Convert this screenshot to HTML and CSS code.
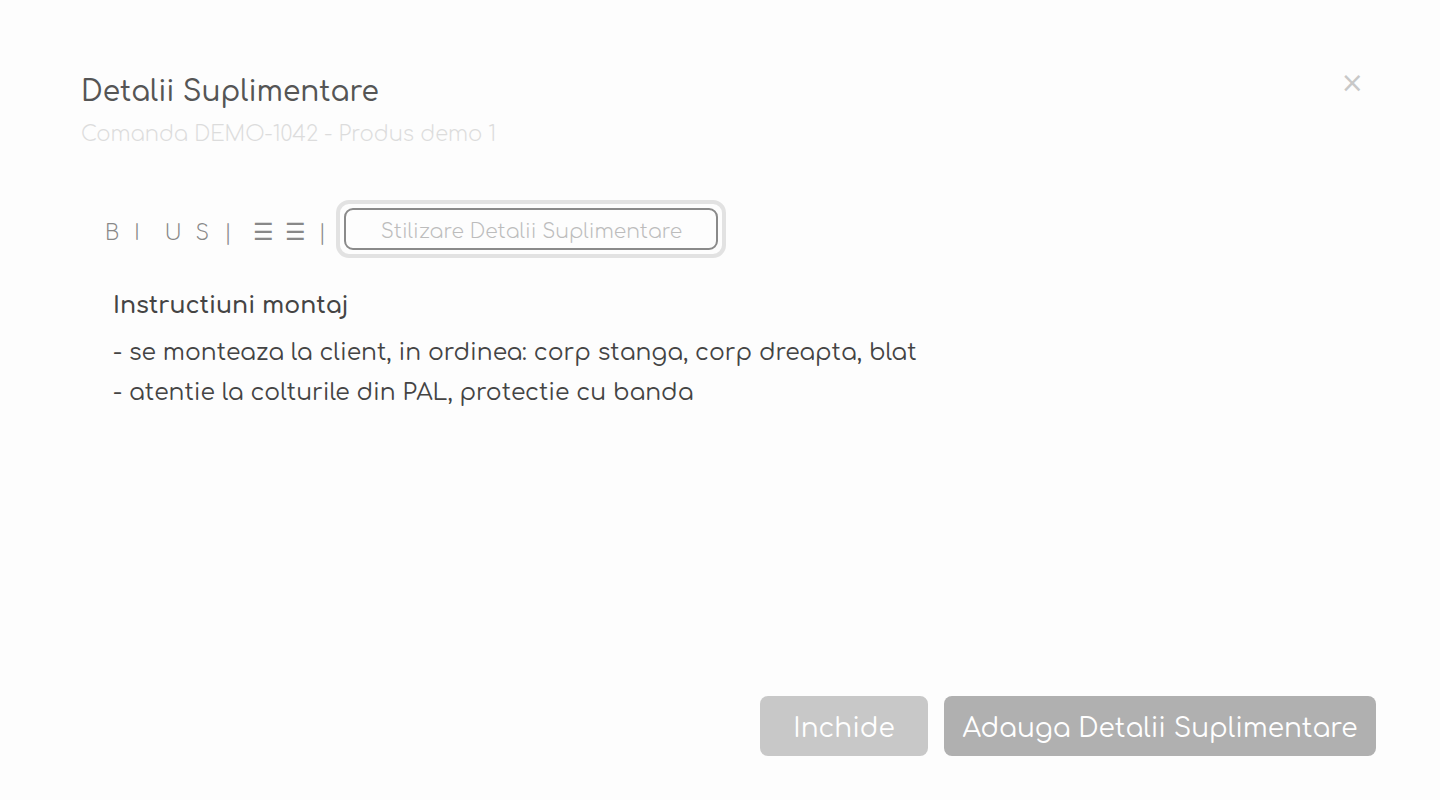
FILE: index.html
```html
<!DOCTYPE html>
<html lang="ro">
<head>
<meta charset="utf-8">
<title>Detalii Suplimentare</title>
<link rel="stylesheet" href="styles.css">
</head>
<body>
<div class="modal">
  <header class="modal-head">
    <div class="titles">
      <h1 class="title">Detalii Suplimentare</h1>
      <p class="subtitle">Comanda DEMO-1042 - Produs demo 1</p>
    </div>
    <button class="close" aria-label="Inchide">×</button>
  </header>

  <div class="toolbar">
    <span class="tb tb-b">B</span>
    <span class="tb tb-i">I</span>
    <span class="tb tb-u">U</span>
    <span class="tb tb-s">S</span>
    <span class="tb sep">|</span>
    <span class="tb list">☰</span>
    <span class="tb list">☰</span>
    <span class="tb sep sep2">|</span>
    <span class="focus-ring"><button class="style-btn">Stilizare Detalii Suplimentare</button></span>
  </div>

  <div class="editor">
    <p class="ed-head">Instructiuni montaj</p>
    <p class="ed-line">- se monteaza la client, in ordinea: corp stanga, corp dreapta, blat</p>
    <p class="ed-line">- atentie la colturile din PAL, protectie cu banda</p>
  </div>

  <footer class="actions">
    <button class="btn btn-close">Inchide</button>
    <button class="btn btn-add">Adauga Detalii Suplimentare</button>
  </footer>
</div>
</body>
</html>
```

FILE: styles.css
```css
* { box-sizing: border-box; }
html, body { margin: 0; height: 100%; }
body {
  background: #fdfdfd;
  font-family: "Comfortaa", "Nunito", "Open Sans", "DejaVu Sans", sans-serif;
  color: #444;
}
.modal {
  height: 800px;
  padding: 72px 64px 44px 81px;
  display: flex;
  flex-direction: column;
}
.modal-head {
  display: flex;
  justify-content: space-between;
  align-items: flex-start;
}
.title {
  margin: 0;
  font-size: 28px;
  font-weight: 500;
  color: #555;
  line-height: 40px;
}
.subtitle {
  margin: 8px 0 0;
  font-size: 21px;
  font-weight: 300;
  color: #dcdcdc;
  line-height: 28px;
}
.close {
  margin: -3px 12px 0 0;
  padding: 0;
  border: 0;
  background: none;
  color: #c8c8c8;
  font-size: 28px;
  line-height: 28px;
  font-family: "DejaVu Sans", sans-serif;
  cursor: pointer;
}
.toolbar {
  margin-top: 52px;
  padding-left: 24px;
  display: flex;
  align-items: center;
  height: 58px;
  color: #888;
  font-size: 21px;
  font-weight: 300;
}
.tb { display: inline-block; padding-top: 8px; }
.tb-b { margin-right: 15px; }
.tb-i { margin-right: 25px; }
.tb-u { margin-right: 14px; }
.tb-s { margin-right: 15px; }
.sep { margin-right: 21px; color: #8c8c8c; }
.list { font-size: 23px; margin-right: 11px; font-family: "DejaVu Sans", sans-serif; color: #888; padding-top: 5px; }
.sep2 { margin-left: 1px; margin-right: 10px; }
.focus-ring {
  display: inline-flex;
  padding: 4px;
  border: 4px solid #e2e2e2;
  border-radius: 13px;
}
.style-btn {
  width: 374px;
  height: 42px;
  border: 2px solid #8a8a8a;
  border-radius: 9px;
  background: #fdfdfd;
  color: #bcbcbc;
  font-family: inherit;
  font-size: 20.3px;
  font-weight: 300;
  padding: 4px 0 0;
}
.editor {
  padding-left: 32px;
  margin-top: 32px;
  flex: 1;
}
.editor p { margin: 0; }
.ed-head {
  font-size: 23.6px;
  font-weight: 600;
  color: #444;
  line-height: 32px;
}
.ed-line {
  font-size: 23.4px;
  line-height: 40px;
  color: #444;
}
.ed-head + .ed-line { margin-top: 10px; }
.actions {
  display: flex;
  justify-content: flex-end;
  gap: 16px;
}
.btn {
  height: 60px;
  border: 0;
  border-radius: 8px;
  color: #fff;
  font-family: inherit;
  font-size: 26.4px;
  padding: 4px 0 0;
}
.btn-close { width: 168px; background: #c8c8c8; }
.btn-add { width: 432px; background: #b0b0b0; }
```
